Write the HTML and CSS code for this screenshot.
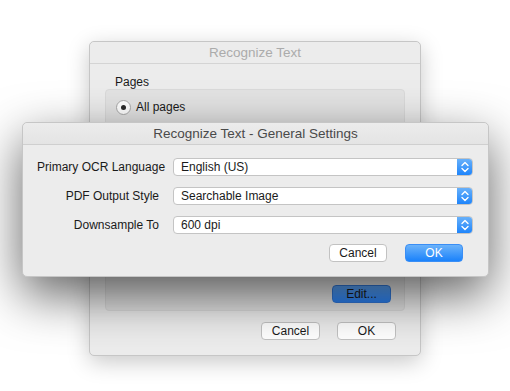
FILE: index.html
```html
<!DOCTYPE html>
<html lang="en">

<head>
    <meta charset="UTF-8">
    <title>Recognize Text</title>
    <link rel="stylesheet" href="styles.css">
</head>

<body>
    <div class="desktop">
        <!-- parent window (inactive) -->
        <div class="window back-window">
            <div class="titlebar inactive">Recognize Text</div>
            <div class="window-body">
                <div class="section-label">Pages</div>
                <div class="group">
                    <label class="radio-row">
                        <span class="radio checked"></span>
                        <span>All pages</span>
                    </label>
                    <div class="list-box"></div>
                    <div class="group-actions">
                        <button class="btn btn-blue-dim">Edit...</button>
                    </div>
                </div>
                <div class="actions back-actions">
                    <button class="btn">Cancel</button>
                    <button class="btn">OK</button>
                </div>
            </div>
        </div>

        <!-- settings sheet -->
        <div class="window sheet">
            <div class="titlebar">Recognize Text - General Settings</div>
            <div class="sheet-body">
                <div class="form">
                    <div class="form-label">Primary OCR Language</div>
                    <div class="popup">
                        <span class="popup-value">English (US)</span>
                        <span class="stepper">
                            <svg width="16" height="18" viewBox="0 0 16 18">
                                <path d="M5 7.5 L8 4.5 L11 7.5 M5 10.5 L8 13.5 L11 10.5" fill="none" stroke="#fff" stroke-width="1.4" stroke-linecap="round" stroke-linejoin="round" />
                            </svg>
                        </span>
                    </div>

                    <div class="form-label">PDF Output Style</div>
                    <div class="popup">
                        <span class="popup-value">Searchable Image</span>
                        <span class="stepper">
                            <svg width="16" height="18" viewBox="0 0 16 18">
                                <path d="M5 7.5 L8 4.5 L11 7.5 M5 10.5 L8 13.5 L11 10.5" fill="none" stroke="#fff" stroke-width="1.4" stroke-linecap="round" stroke-linejoin="round" />
                            </svg>
                        </span>
                    </div>

                    <div class="form-label">Downsample To</div>
                    <div class="popup">
                        <span class="popup-value">600 dpi</span>
                        <span class="stepper">
                            <svg width="16" height="18" viewBox="0 0 16 18">
                                <path d="M5 7.5 L8 4.5 L11 7.5 M5 10.5 L8 13.5 L11 10.5" fill="none" stroke="#fff" stroke-width="1.4" stroke-linecap="round" stroke-linejoin="round" />
                            </svg>
                        </span>
                    </div>
                </div>

                <div class="actions sheet-actions">
                    <button class="btn">Cancel</button>
                    <button class="btn btn-blue">OK</button>
                </div>
            </div>
        </div>
    </div>
</body>

</html>
```

FILE: styles.css
```css
body {
    margin: 0;
    background-color: #ffffff;
    font-family: 'Liberation Sans', Arial, sans-serif;
    font-size: 12px;
    color: #1a1a1a;
}

.desktop {
    position: relative;
    width: 510px;
    height: 391px;
    overflow: hidden;
}

.window {
    position: absolute;
    background-color: #ececec;
    border: 1px solid #c6c6c6;
    border-radius: 5px;
    box-sizing: border-box;
    display: flex;
    flex-direction: column;
}

.back-window {
    left: 89px;
    top: 41px;
    width: 332px;
    height: 315px;
    box-shadow: 0 6px 22px rgba(0, 0, 0, 0.22);
}

.sheet {
    left: 22px;
    top: 122px;
    width: 467px;
    height: 155px;
    box-shadow: 0 18px 50px rgba(0, 0, 0, 0.62);
}

.titlebar {
    height: 21px;
    line-height: 21px;
    text-align: center;
    font-size: 13.5px;
    color: #4a4a4a;
    background: linear-gradient(#ececec, #e4e4e4);
    border-bottom: 1px solid #cfcfcf;
    border-radius: 5px 5px 0 0;
}

.titlebar.inactive {
    color: #ababab;
    background: #ececec;
    border-bottom-color: #d4d4d4;
}

.window-body {
    padding: 11px 15px 0 15px;
    display: flex;
    flex-direction: column;
}

.section-label {
    padding-left: 10px;
    height: 14px;
    line-height: 14px;
}

.group {
    height: 222px;
    box-sizing: border-box;
    background-color: #e3e3e3;
    border: 1px solid #dadada;
    border-radius: 4px;
    padding: 9px 13px 7px 8px;
    display: flex;
    flex-direction: column;
}

.radio-row {
    display: flex;
    align-items: center;
    gap: 5px;
    height: 16px;
    padding-left: 2px;
}

.radio {
    width: 13px;
    height: 13px;
    border-radius: 50%;
    background: #ffffff;
    border: 1px solid #a9a9a9;
    display: flex;
    align-items: center;
    justify-content: center;
}

.radio.checked::after {
    content: '';
    width: 5px;
    height: 5px;
    border-radius: 50%;
    background: #2a2a2a;
}

.list-box {
    margin-top: 14px;
    height: 147px;
    width: 249px;
    background: #ececec;
    border: 1px solid #cfcfcf;
    box-sizing: border-box;
}

.group-actions {
    margin-top: 9px;
    display: flex;
    justify-content: flex-end;
}

.actions {
    display: flex;
    justify-content: flex-end;
    gap: 17px;
}

.back-actions {
    margin-top: 11px;
    padding-right: 9px;
}

.btn {
    width: 59px;
    height: 18px;
    padding: 0;
    font-family: 'Liberation Sans', Arial, sans-serif;
    font-size: 12px;
    color: #1a1a1a;
    background: #ffffff;
    border: 1px solid #c2c2c2;
    border-radius: 4px;
    box-sizing: border-box;
    line-height: 16px;
}

.btn-blue {
    color: #ffffff;
    background: linear-gradient(#6cb3fa, #1a82fb);
    border-color: #3a8ef5;
}

.btn-blue-dim {
    color: #1a1a1a;
    background: linear-gradient(#5ba4f8, #2a7ff0);
    border-color: #3278d8;
}

.sheet-body {
    padding: 13px 15px 0 14px;
    display: flex;
    flex-direction: column;
}

.form {
    display: grid;
    grid-template-columns: minmax(0, 1fr) 300px;
    column-gap: 14px;
    row-gap: 11px;
    align-items: center;
}

.form-label {
    text-align: right;
    white-space: nowrap;
}

.popup {
    height: 18px;
    display: flex;
    background: #ffffff;
    border: 1px solid #c4c4c4;
    border-radius: 4px;
    box-sizing: border-box;
    overflow: hidden;
}

.popup-value {
    flex: 1;
    padding-left: 7px;
    line-height: 16px;
}

.stepper {
    width: 16px;
    margin: -1px -1px -1px 0;
    background: linear-gradient(#6cb3fa, #1a82fb);
    display: flex;
    align-items: center;
    justify-content: center;
}

.sheet-actions {
    margin-top: 10px;
    padding-right: 10px;
    gap: 18px;
}

.sheet-actions .btn {
    width: 58px;
}
```
